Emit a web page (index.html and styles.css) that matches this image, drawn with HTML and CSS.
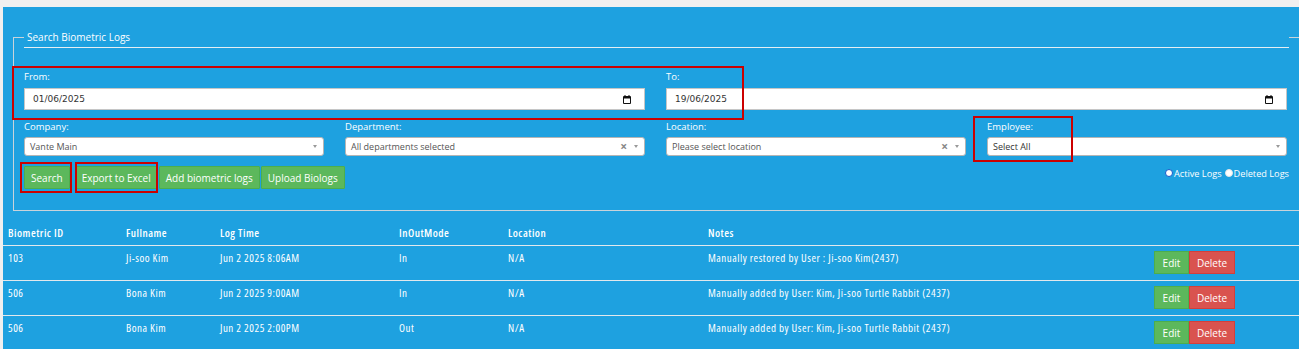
FILE: index.html
```html
<!DOCTYPE html>
<html lang="en">
<head>
    <meta charset="UTF-8">
    <title>Biometric Logs</title>
    <link rel="stylesheet" href="styles.css">
</head>
<body>
    <div class="panel">
        <fieldset class="search">
            <legend>Search Biometric Logs</legend>
            <div class="grid">
                <div class="field wide">
                    <label>From:</label>
                    <div class="date-input">
                        <span>01/06/2025</span>
                        <svg class="cal" width="10" height="10" viewBox="0 0 10 10"><path d="M1.5 2.5h7v7h-7z" fill="none" stroke="#111"/><path d="M1.5 3h7v1.5h-7z" fill="#111"/><path d="M3 1v2M7 1v2" stroke="#111"/></svg>
                    </div>
                </div>
                <div class="field wide">
                    <label>To:</label>
                    <div class="date-input">
                        <span>19/06/2025</span>
                        <svg class="cal" width="10" height="10" viewBox="0 0 10 10"><path d="M1.5 2.5h7v7h-7z" fill="none" stroke="#111"/><path d="M1.5 3h7v1.5h-7z" fill="#111"/><path d="M3 1v2M7 1v2" stroke="#111"/></svg>
                    </div>
                </div>
                <div class="field">
                    <label>Company:</label>
                    <div class="select"><span class="value">Vante Main</span><span class="arrow"></span></div>
                </div>
                <div class="field">
                    <label>Department:</label>
                    <div class="select"><span class="value">All departments selected</span><span class="clear">&times;</span><span class="arrow"></span></div>
                </div>
                <div class="field">
                    <label>Location:</label>
                    <div class="select"><span class="value">Please select location</span><span class="clear">&times;</span><span class="arrow"></span></div>
                </div>
                <div class="field">
                    <label>Employee:</label>
                    <div class="select"><span class="value dark">Select All</span><span class="arrow"></span></div>
                </div>
            </div>
            <div class="actions">
                <div class="btns">
                    <button class="btn first">Search</button>
                    <button class="btn">Export to Excel</button>
                    <button class="btn">Add biometric logs</button>
                    <button class="btn">Upload Biologs</button>
                </div>
                <div class="radios">
                    <span class="radio checked"></span>Active Logs
                    <span class="radio"></span>Deleted Logs
                </div>
            </div>
        </fieldset>

        <table class="logs">
            <colgroup>
                <col style="width:118px"><col style="width:94px"><col style="width:179px"><col style="width:109px"><col style="width:200px"><col style="width:446px"><col>
            </colgroup>
            <thead>
                <tr><th>Biometric ID</th><th>Fullname</th><th>Log Time</th><th>InOutMode</th><th>Location</th><th>Notes</th><th></th></tr>
            </thead>
            <tbody>
                <tr>
                    <td>103</td><td>Ji-soo Kim</td><td>Jun 2 2025 8:06AM</td><td>In</td><td>N/A</td>
                    <td>Manually restored by User : Ji-soo Kim(2437)</td>
                    <td class="row-btns"><button class="sm edit">Edit</button><button class="sm del">Delete</button></td>
                </tr>
                <tr>
                    <td>506</td><td>Bona Kim</td><td>Jun 2 2025 9:00AM</td><td>In</td><td>N/A</td>
                    <td>Manually added by User: Kim, Ji-soo Turtle Rabbit (2437)</td>
                    <td class="row-btns"><button class="sm edit">Edit</button><button class="sm del">Delete</button></td>
                </tr>
                <tr>
                    <td>506</td><td>Bona Kim</td><td>Jun 2 2025 2:00PM</td><td>Out</td><td>N/A</td>
                    <td>Manually added by User: Kim, Ji-soo Turtle Rabbit (2437)</td>
                    <td class="row-btns"><button class="sm edit">Edit</button><button class="sm del">Delete</button></td>
                </tr>
            </tbody>
        </table>

        <!-- annotation boxes drawn over the form -->
        <div class="mark mark-dates"></div>
        <div class="mark mark-employee"></div>
        <div class="mark mark-search"></div>
        <div class="mark mark-export"></div>
    </div>
</body>
</html>
```

FILE: styles.css
```css
html, body {
    margin: 0;
    overflow: hidden;
}

body {
    background: #f0f0f0;
    font-family: 'Open Sans', 'Liberation Sans', sans-serif;
    padding: 7px 0 0 3px;
    height: 342px;
}

.panel {
    position: relative;
    background: #1ea1e0;
    padding-top: 20px;
    height: 400px;
}

.search {
    margin: 0 0 0 10px;
    padding: 0 10px 21px 10px;
    border: 1px solid #c9d3da;
    width: 1320px;
    min-width: 0;
    box-sizing: border-box;
}

.search legend {
    width: 1265px;
    box-sizing: border-box;
    margin: 0;
    padding: 0 0 0 3px;
    font-size: 10px;
    line-height: 20px;
    color: #fff;
    border-bottom: 1px solid #e6eef3;
}

.grid {
    display: grid;
    grid-template-columns: repeat(4, 300px);
    column-gap: 21px;
    row-gap: 10px;
    margin-top: 22px;
}

.field label {
    display: block;
    font-size: 9.5px;
    line-height: 14px;
    color: #fff;
    margin-bottom: 3px;
}

.field.wide {
    grid-column: span 2;
}

.field.wide label {
    margin-bottom: 4px;
}

.date-input {
    height: 22px;
    box-sizing: border-box;
    background: #fff;
    border: 1px solid #c6c6c6;
    display: flex;
    align-items: center;
    padding: 0 12px 0 8px;
    font-family: 'DejaVu Sans', sans-serif;
    font-size: 9px;
    color: #333;
}

.date-input span {
    flex: 1;
}

.select {
    height: 19px;
    box-sizing: border-box;
    background: #fff;
    border: 1px solid #b5b5b5;
    border-radius: 3px;
    display: flex;
    align-items: center;
    padding: 0 6px 0 5px;
    font-size: 9px;
    color: #555;
}

.select .value {
    flex: 1;
}

.select .value.dark {
    color: #333;
}

.select .clear {
    color: #888;
    font-weight: bold;
    font-size: 12px;
    line-height: 12px;
    margin-right: 7px;
}

.select .arrow {
    width: 0;
    height: 0;
    border-left: 2px solid transparent;
    border-right: 2px solid transparent;
    border-top: 3px solid #999;
}

.actions {
    display: flex;
    justify-content: space-between;
    margin-top: 10px;
    width: 1265px;
}

.btns {
    display: flex;
}

.btn {
    height: 23px;
    margin: 0 1px 0 0;
    padding: 0 6px;
    background: #5cb85c;
    border: 1px solid #4cae4c;
    border-radius: 1px;
    color: #fff;
    font-family: 'Open Sans', sans-serif;
    font-size: 10px;
    cursor: pointer;
}

.btn.first {
    margin-right: 5px;
}

.radios {
    display: flex;
    align-items: center;
    height: 14px;
    font-size: 9.2px;
    color: #fff;
}

.radio {
    width: 6px;
    height: 6px;
    border-radius: 50%;
    background: #fff;
    border: 1px solid #e6e6e6;
    margin: 0 1px 0 3px;
}

.radio.checked {
    border-color: #1558c9;
}

.logs {
    width: 1296px;
    border-collapse: collapse;
    table-layout: fixed;
    color: #fff;
    font-family: 'Open Sans', sans-serif;
    font-stretch: 75%;
    font-size: 11px;
    letter-spacing: 0.5px;
}

.logs th {
    text-align: left;
    font-weight: 600;
    padding: 15px 5px 5px;
    line-height: 14px;
    border-bottom: 1px solid #e2e8ec;
}

.logs td {
    vertical-align: top;
    font-weight: 400;
    padding: 5px 5px 6px;
    line-height: 14px;
    border-bottom: 1px solid #e2e8ec;
}

.logs td.row-btns {
    white-space: nowrap;
    letter-spacing: 0;
}

.sm {
    height: 23px;
    padding: 0;
    font-family: 'Open Sans', sans-serif;
    font-size: 10px;
    color: #fff;
    border-radius: 0;
    vertical-align: top;
    cursor: pointer;
}

.sm.edit {
    width: 35px;
    background: #5cb85c;
    border: 1px solid #4cae4c;
}

.sm.del {
    width: 46px;
    background: #d9534f;
    border: 1px solid #d43f3a;
}

.mark {
    position: absolute;
    border: 2px solid #cc0000;
    box-sizing: border-box;
}

.mark-dates {
    left: 9px;
    top: 59px;
    width: 732px;
    height: 54px;
}

.mark-employee {
    left: 970px;
    top: 109px;
    width: 100px;
    height: 46px;
}

.mark-search {
    left: 17px;
    top: 155px;
    width: 52px;
    height: 31px;
}

.mark-export {
    left: 72px;
    top: 155px;
    width: 83px;
    height: 31px;
}
```
